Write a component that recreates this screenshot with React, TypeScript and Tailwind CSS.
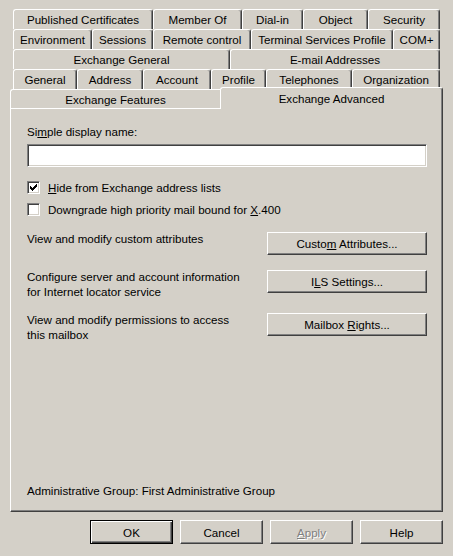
import React from "react";

type TabDef = { label: React.ReactNode; w: string };

const row1: TabDef[] = [
  { label: "Published Certificates", w: "w-[140px]" },
  { label: "Member Of", w: "w-[89px]" },
  { label: "Dial-in", w: "w-[61px]" },
  { label: "Object", w: "w-[65px]" },
  { label: "Security", w: "w-[72px]" },
];

const row2: TabDef[] = [
  { label: "Environment", w: "w-[79px]" },
  { label: "Sessions", w: "w-[61px]" },
  { label: "Remote control", w: "w-[98px]" },
  { label: "Terminal Services Profile", w: "w-[142px]" },
  { label: "COM+", w: "w-[47px]" },
];

const row3: TabDef[] = [
  { label: "Exchange General", w: "w-[217px]" },
  { label: "E-mail Addresses", w: "w-[210px]" },
];

const row4: TabDef[] = [
  { label: "General", w: "w-[64px]" },
  { label: "Address", w: "w-[66px]" },
  { label: "Account", w: "w-[68px]" },
  { label: "Profile", w: "w-[55px]" },
  { label: "Telephones", w: "w-[86px]" },
  { label: "Organization", w: "w-[88px]" },
];

function Tab({ label, w }: TabDef) {
  return (
    <div
      className={`${w} h-[20px] shrink-0 flex items-center justify-center border-l border-t border-r border-l-white border-t-white border-r-[#404040] rounded-t-[3px] shadow-[inset_-1px_0_0_#808080] bg-[#d4d0c8]`}
    >
      <span>{label}</span>
    </div>
  );
}

function TabRow({ tabs }: { tabs: TabDef[] }) {
  return (
    <div className="flex ml-[13px] h-[20px]">
      {tabs.map((t, i) => (
        <Tab key={i} {...t} />
      ))}
    </div>
  );
}

function Button({
  children,
  w,
  isDefault,
  disabled,
}: {
  children: React.ReactNode;
  w: string;
  isDefault?: boolean;
  disabled?: boolean;
}) {
  const bevel = isDefault
    ? "border border-black shadow-[inset_1px_1px_0_#ffffff,inset_-1px_-1px_0_#404040,inset_-2px_-2px_0_#808080]"
    : "border border-t-white border-l-white border-r-[#404040] border-b-[#404040] shadow-[inset_-1px_-1px_0_#808080]";
  return (
    <div
      className={`${w} shrink-0 flex items-center justify-center bg-[#d4d0c8] ${bevel} ${
        disabled ? "text-[#808080] [text-shadow:1px_1px_0_#ffffff]" : "text-black"
      }`}
    >
      <span>{children}</span>
    </div>
  );
}

function CheckBox({ checked }: { checked?: boolean }) {
  return (
    <div className="w-[13px] h-[13px] shrink-0 bg-white border border-t-[#808080] border-l-[#808080] border-r-white border-b-white shadow-[inset_1px_1px_0_#404040,inset_-1px_-1px_0_#d4d0c8] flex items-center justify-center">
      {checked && (
        <svg width="7" height="7" viewBox="0 0 7 7" shapeRendering="crispEdges">
          <path
            d="M0 2h1v3h-1zM1 3h1v3h-1zM2 4h1v3h-1zM3 3h1v3h-1zM4 2h1v3h-1zM5 1h1v3h-1zM6 0h1v3h-1z"
            fill="#000"
          />
        </svg>
      )}
    </div>
  );
}

export default function App() {
  return (
    <div className="w-[453px] h-[556px] bg-[#d4d0c8] overflow-hidden text-black font-['Liberation_Sans',Arial,sans-serif] text-[11.6px] leading-[15px] select-none">
      <div className="pt-[9px]">
        <TabRow tabs={row1} />
        <TabRow tabs={row2} />
        <TabRow tabs={row3} />
        <TabRow tabs={row4} />
        <div className="flex items-end ml-[10px] h-[21px] -mt-[2px]">
          <div className="w-[210px] h-[19px] shrink-0 flex items-center justify-center border-l border-t border-l-white border-t-white rounded-tl-[3px] bg-[#d4d0c8]">
            <span>Exchange Features</span>
          </div>
          <div className="relative z-10 w-[223px] h-[22px] -mb-[1px] shrink-0 flex items-start justify-center pt-[3px] border-l border-t border-r border-l-white border-t-white border-r-[#404040] rounded-t-[3px] shadow-[inset_-1px_0_0_#808080] bg-[#d4d0c8]">
            <span>Exchange Advanced</span>
          </div>
        </div>
      </div>

      <div className="ml-[10px] w-[433px] h-[404px] border border-t-white border-l-white border-r-[#404040] border-b-[#404040] shadow-[inset_-1px_-1px_0_#808080] flex flex-col pl-[16px] pr-[15px] pt-[15px] pb-[13px]">
        <div>
          Si<u>m</u>ple display name:
        </div>
        <div className="mt-[5px] h-[23px] bg-white border border-t-[#808080] border-l-[#808080] border-r-white border-b-white shadow-[inset_1px_1px_0_#404040,inset_-1px_-1px_0_#d4d0c8]" />

        <div className="mt-[13px] flex items-center gap-[8px] h-[15px]">
          <CheckBox checked />
          <span>
            <u>H</u>ide from Exchange address lists
          </span>
        </div>
        <div className="mt-[7px] flex items-center gap-[8px] h-[15px]">
          <CheckBox />
          <span>
            Downgrade high priority mail bound for <u>X</u>.400
          </span>
        </div>

        <div className="mt-[14px] flex items-start justify-between">
          <div>View and modify custom attributes</div>
          <div className="mt-[1px]">
            <Button w="w-[160px] h-[23px]">
              Custo<u>m</u> Attributes...
            </Button>
          </div>
        </div>

        <div className="mt-[14px] flex items-start justify-between">
          <div>
            Configure server and account information
            <br />
            for Internet locator service
          </div>
          <div className="mt-[1px]">
            <Button w="w-[160px] h-[23px]">
              I<u>L</u>S Settings...
            </Button>
          </div>
        </div>

        <div className="mt-[13px] flex items-start justify-between">
          <div>
            View and modify permissions to access
            <br />
            this mailbox
          </div>
          <div className="mt-[1px]">
            <Button w="w-[160px] h-[23px]">
              Mailbox <u>R</u>ights...
            </Button>
          </div>
        </div>

        <div className="mt-auto">Administrative Group: First Administrative Group</div>
      </div>

      <div className="flex justify-end gap-[7px] mt-[8px] pr-[10px]">
        <Button w="w-[83px] h-[24px]" isDefault>
          OK
        </Button>
        <Button w="w-[83px] h-[24px]">Cancel</Button>
        <Button w="w-[83px] h-[24px]" disabled>
          <u>A</u>pply
        </Button>
        <Button w="w-[83px] h-[24px]">Help</Button>
      </div>
    </div>
  );
}
